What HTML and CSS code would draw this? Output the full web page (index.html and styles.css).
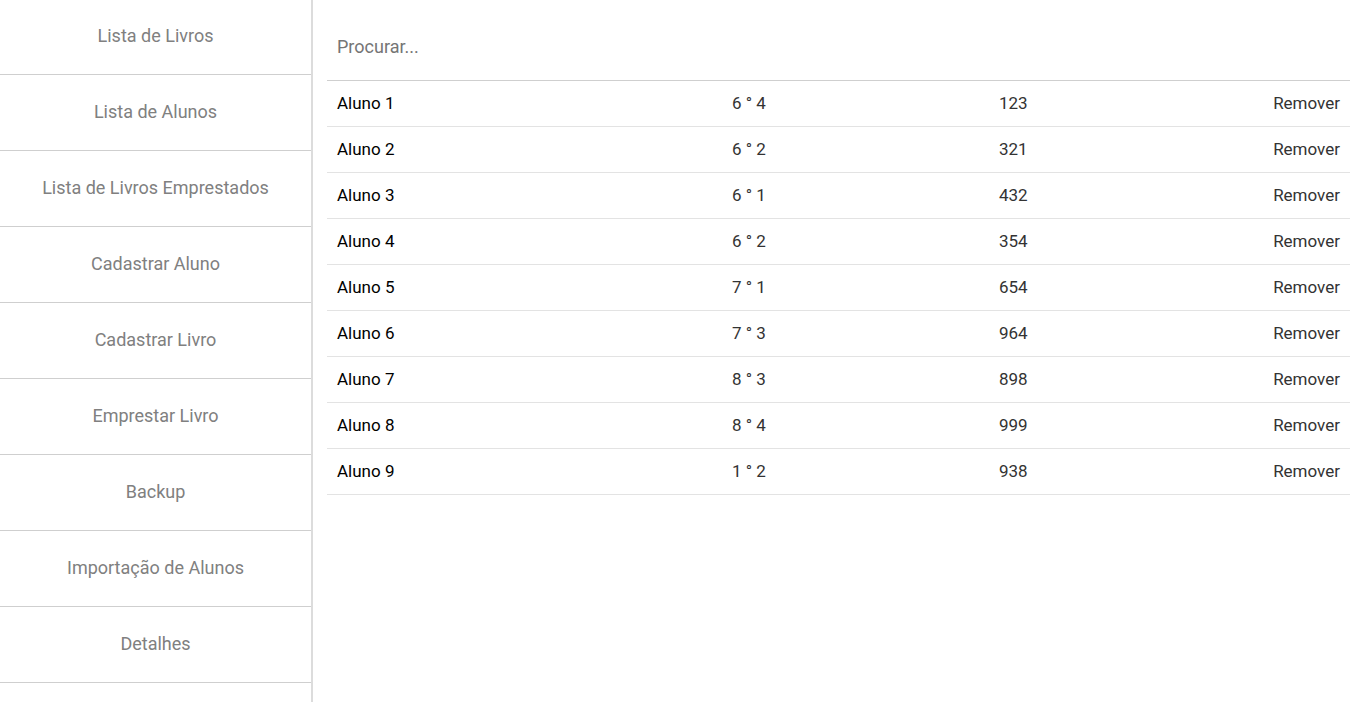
FILE: index.html
```html
<!DOCTYPE html>
<html lang="pt">
<head>
<meta charset="utf-8">
<title>Biblioteca</title>
<link rel="stylesheet" href="styles.css">
</head>
<body>
<div class="app">
  <nav class="sidebar">
    <a class="nav-item">Lista de Livros</a>
    <a class="nav-item">Lista de Alunos</a>
    <a class="nav-item">Lista de Livros Emprestados</a>
    <a class="nav-item">Cadastrar Aluno</a>
    <a class="nav-item">Cadastrar Livro</a>
    <a class="nav-item">Emprestar Livro</a>
    <a class="nav-item">Backup</a>
    <a class="nav-item">Importação de Alunos</a>
    <a class="nav-item">Detalhes</a>
  </nav>
  <main class="content">
    <div class="search">
      <input class="search-input" type="text" placeholder="Procurar...">
    </div>
    <div class="table">
      <div class="row"><span class="name">Aluno 1</span><span>6 ° 4</span><span>123</span><span class="action">Remover</span></div>
      <div class="row"><span class="name">Aluno 2</span><span>6 ° 2</span><span>321</span><span class="action">Remover</span></div>
      <div class="row"><span class="name">Aluno 3</span><span>6 ° 1</span><span>432</span><span class="action">Remover</span></div>
      <div class="row"><span class="name">Aluno 4</span><span>6 ° 2</span><span>354</span><span class="action">Remover</span></div>
      <div class="row"><span class="name">Aluno 5</span><span>7 ° 1</span><span>654</span><span class="action">Remover</span></div>
      <div class="row"><span class="name">Aluno 6</span><span>7 ° 3</span><span>964</span><span class="action">Remover</span></div>
      <div class="row"><span class="name">Aluno 7</span><span>8 ° 3</span><span>898</span><span class="action">Remover</span></div>
      <div class="row"><span class="name">Aluno 8</span><span>8 ° 4</span><span>999</span><span class="action">Remover</span></div>
      <div class="row"><span class="name">Aluno 9</span><span>1 ° 2</span><span>938</span><span class="action">Remover</span></div>
    </div>
  </main>
</div>
</body>
</html>
```

FILE: styles.css
```css
* { box-sizing: border-box; }
html, body {
  margin: 0;
  padding: 0;
  height: 100%;
  background: #fff;
  font-family: Roboto, "Liberation Sans", Arial, sans-serif;
  overflow: hidden;
}
.app {
  display: flex;
  height: 100%;
}
.sidebar {
  width: 313px;
  flex: none;
  border-right: 2px solid #dcdcdc;
  display: flex;
  flex-direction: column;
  margin-top: -1px;
}
.nav-item {
  display: flex;
  align-items: center;
  justify-content: center;
  height: 76px;
  padding-bottom: 2px;
  border-bottom: 1px solid #cfcfcf;
  font-size: 18px;
  color: #808080;
  text-decoration: none;
  cursor: pointer;
}
.content {
  flex: 1;
  padding: 0 16px 0 14px;
}
.search {
  height: 81px;
  border-bottom: 1px solid #cfcfcf;
  display: flex;
  align-items: center;
  padding-top: 13px;
}
.search-input {
  border: none;
  outline: none;
  width: 100%;
  font-family: inherit;
  font-size: 18px;
  padding: 0 10px;
  color: #333;
  background: transparent;
}
.search-input::placeholder { color: #757575; }
.table { display: flex; flex-direction: column; }
.row {
  display: grid;
  grid-template-columns: 395px 267px 1fr auto;
  height: 46px;
  align-items: center;
  border-bottom: 1px solid #e3e3e3;
  font-size: 17px;
  color: #333;
  padding-bottom: 2px;
}
.row span { padding: 0 10px; }
.row .name { color: #000; }
.row .action { text-align: right; }
```
